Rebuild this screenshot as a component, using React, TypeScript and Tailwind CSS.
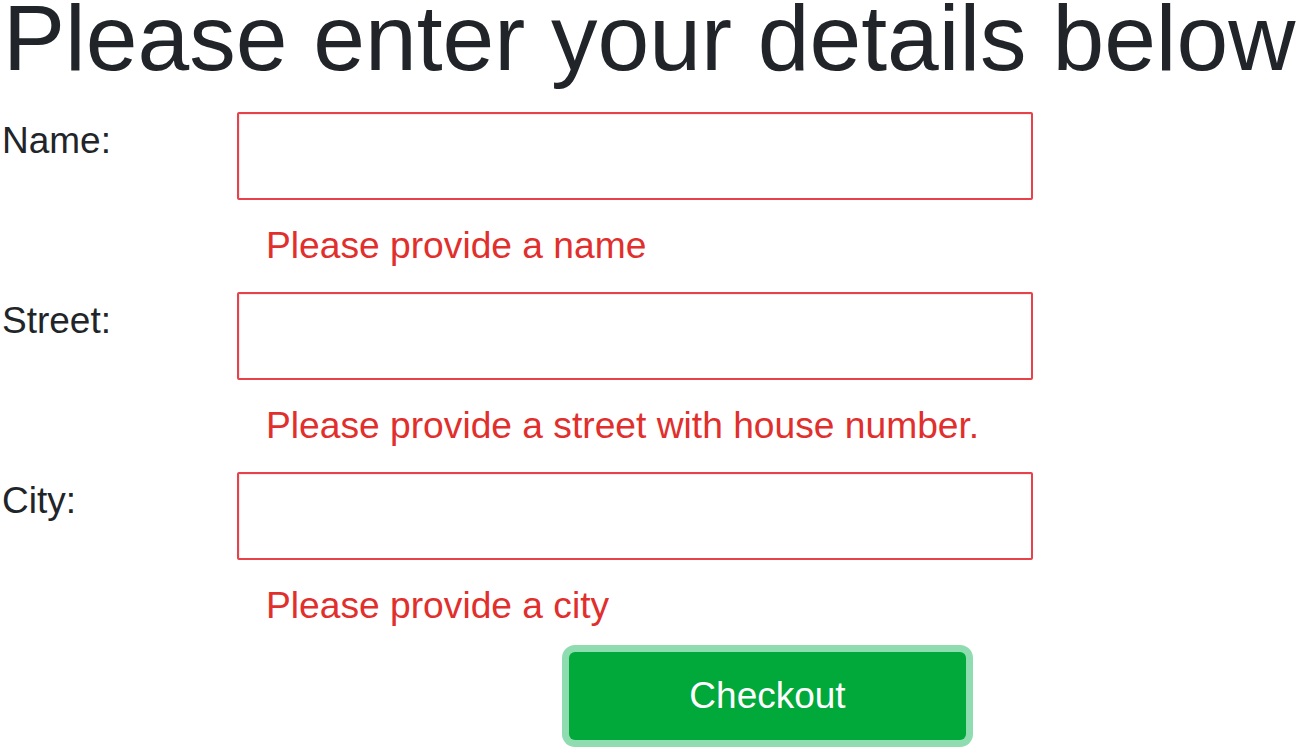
const fields = [
  { label: 'Name:', error: 'Please provide a name' },
  { label: 'Street:', error: 'Please provide a street with house number.' },
  { label: 'City:', error: 'Please provide a city' },
];

export default function App() {
  return (
    <div
      className="min-h-[750px] bg-white text-[#212529]"
      style={{ fontFamily: '"Liberation Sans", Arial, sans-serif' }}
    >
      <h1 className="pl-[3px] text-[93px] font-normal leading-[76px] whitespace-nowrap">
        Please enter your details below
      </h1>

      <form className="mt-9 flex flex-col">
        {fields.map((f) => (
          <div key={f.label} className="flex flex-col pb-[25px]">
            <div className="flex">
              <label className="w-[237px] pl-[2px] pt-[7px] text-[37px] leading-[43px]">{f.label}</label>
              <input
                type="text"
                className="h-[88px] w-[796px] rounded-[2px] border-2 border-[#e8414a] bg-white shadow-[inset_1px_1px_1px_rgba(0,0,0,0.08)] outline-none"
              />
            </div>
            <div className="ml-[266px] mt-6 text-[37.2px] leading-[43px] text-[#e12f2d]">{f.error}</div>
          </div>
        ))}

        <div className="pl-[569px]">
          <button
            type="submit"
            className="h-[88px] w-[397px] rounded-[6px] bg-[#00a93a] text-[37px] text-white shadow-[0_0_0_7px_#8edcb0]"
          >
            Checkout
          </button>
        </div>
      </form>
    </div>
  );
}
